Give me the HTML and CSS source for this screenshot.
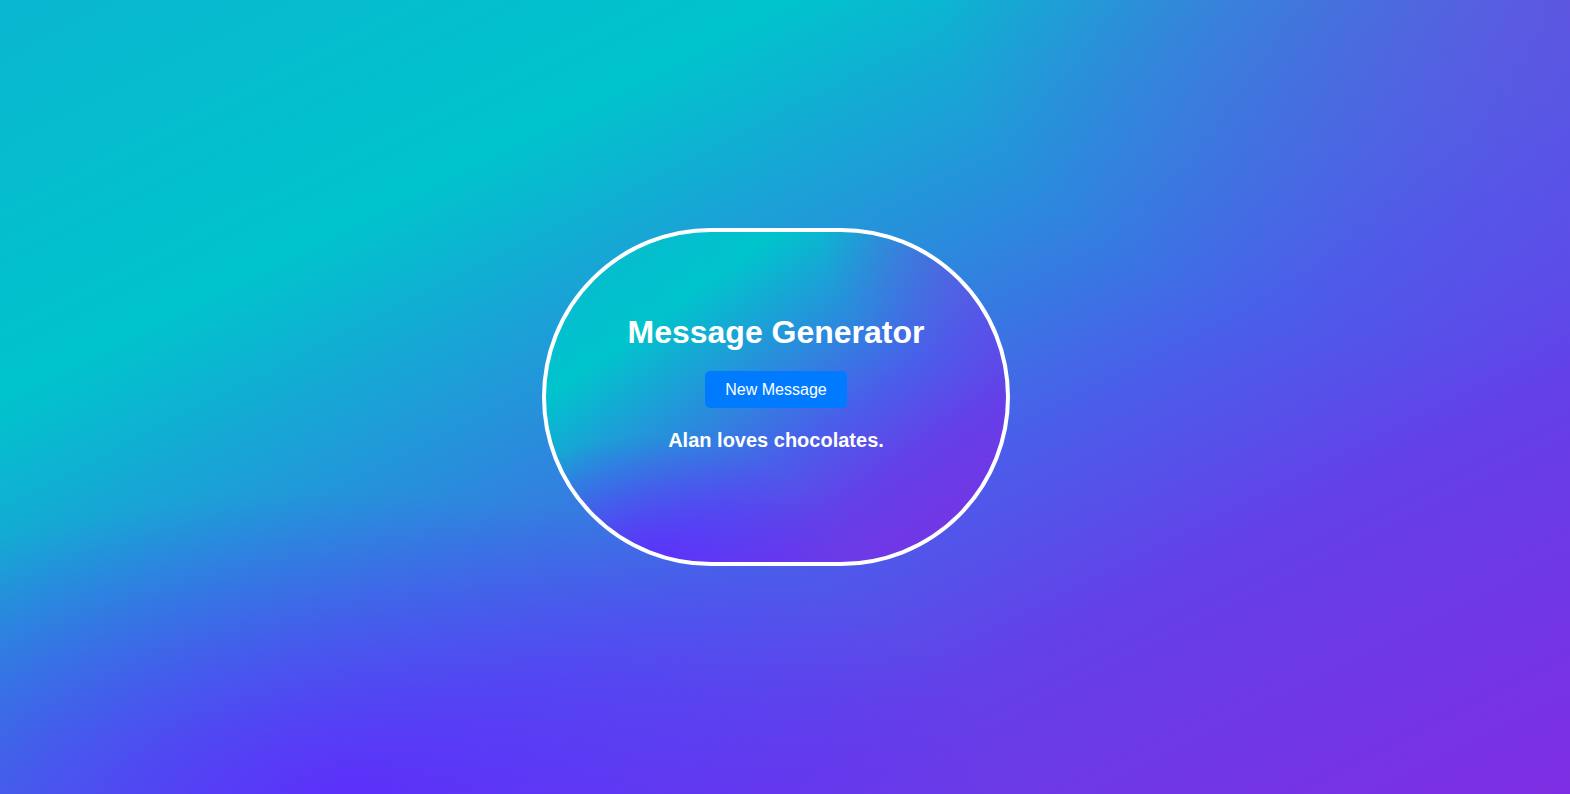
FILE: index.html
```html
<!DOCTYPE html>
<html lang="en">
<head>
<meta charset="utf-8">
<title>Message Generator</title>
<link rel="stylesheet" href="styles.css">
</head>
<body>
<main class="page">
  <section class="card">
    <h1 class="title">Message Generator</h1>
    <button class="btn" type="button">New Message</button>
    <p class="message">Alan loves chocolates.</p>
  </section>
</main>
</body>
</html>
```
FILE: styles.css
```css
html, body {
  margin: 0;
  height: 100%;
}

body {
  font-family: "Liberation Sans", Arial, sans-serif;
  color: #ffffff;
}

.page,
.card {
  background:
    radial-gradient(42% 38% at 22% 100%, rgba(98, 34, 255, 0.75), rgba(98, 34, 255, 0) 100%),
    radial-gradient(40% 45% at 100% 0%, rgba(122, 60, 226, 0.6), rgba(122, 60, 226, 0) 100%),
    linear-gradient(to bottom right, #0ab6d0 0%, #00c4cc 25%, #1aa2d6 37%, #2e86de 47%, #4a5eea 60%, #6440e8 74%, #7e2ee2 100%);
}

.page {
  box-sizing: border-box;
  height: 100vh;
  display: flex;
  justify-content: center;
  align-items: center;
  padding-right: 18px;
}

.card {
  box-sizing: border-box;
  width: 468px;
  height: 338px;
  border: 4px solid #ffffff;
  border-radius: 200px;
  padding-top: 82px;
  text-align: center;
}

.title {
  margin: 0 0 20px;
  font-size: 32px;
  font-weight: bold;
}

.btn {
  font-family: "Liberation Sans", Arial, sans-serif;
  font-size: 16px;
  line-height: 17px;
  padding: 10px 20px;
  border: none;
  border-radius: 5px;
  background: #007bff;
  color: #ffffff;
  cursor: pointer;
}

.message {
  margin: 21px 0 0;
  font-size: 20px;
  font-weight: bold;
}
```
